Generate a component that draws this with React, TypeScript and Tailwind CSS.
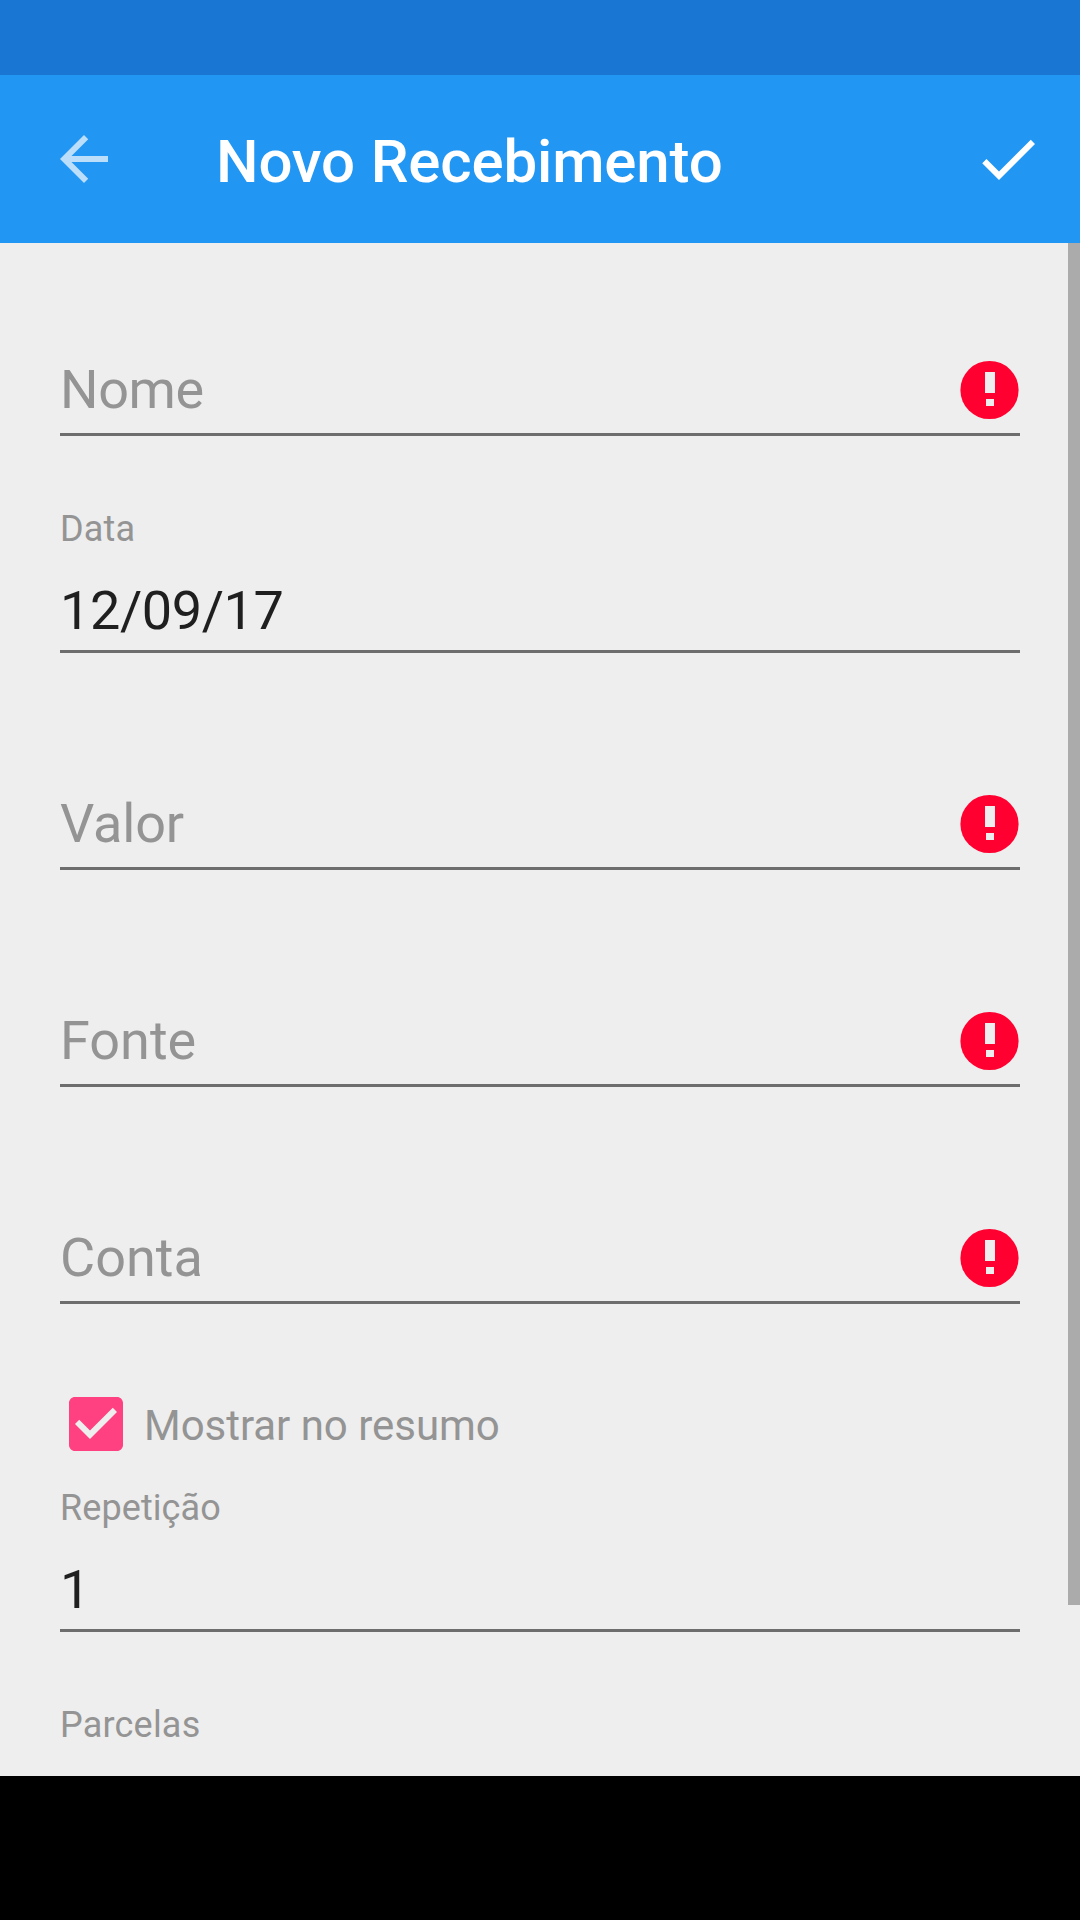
type FieldProps = { label: string; value?: string; error?: boolean; floating?: boolean; tracking?: string };

function ErrorIcon() {
  return (
    <svg className="size-[60px]" viewBox="0 0 60 60">
      <circle cx="29.5" cy="30" r="29.1" fill="#ff0030" />
      <path d="M25 12h10v21H25zM26 39h8v7h-8z" fill="#eee" />
    </svg>
  );
}

function Field({ label, value, error, floating, tracking = "tracking-normal" }: FieldProps) {
  return (
    <div className="h-[217px]">
      {floating ? (
        <div className="h-[169px] border-b-[3px] border-[#6d6d6d] pt-[24px]">
          <div className={`text-[36px] leading-[42px] text-[#949494] ${tracking}`}>{label}</div>
          {value && (
            <div className="mt-[29px] text-[54px] leading-[64px] tracking-[-0.4px] text-[#1f1f1f]">{value}</div>
          )}
        </div>
      ) : (
        <div className="flex h-[169px] items-start justify-between border-b-[3px] border-[#6d6d6d]">
          <div className={`mt-[91px] text-[54px] leading-[64px] text-[#949494] ${tracking}`}>{label}</div>
          {error && (
            <div className="mt-[93px]">
              <ErrorIcon />
            </div>
          )}
        </div>
      )}
    </div>
  );
}

export default function App() {
  return (
    <div className="flex h-[1920px] w-[1080px] flex-col overflow-hidden bg-black font-['Roboto',sans-serif]">
      <div className="h-[75px] shrink-0 bg-[#1976d2]" />
      <header className="flex h-[168px] shrink-0 items-center bg-[#2196f3] text-white">
        <svg className="ml-[48px] size-[72px]" viewBox="0 0 24 24" fill="#bbdefb">
          <path d="M20 11H7.83l5.59-5.59L12 4l-8 8 8 8 1.41-1.41L7.83 13H20v-2z" />
        </svg>
        <h1 className="ml-[96px] grow pt-[5px] text-[60px] leading-[70px] font-medium tracking-[-0.15px] [word-spacing:1px]">Novo Recebimento</h1>
        <svg className="mr-[36px] size-[72px]" viewBox="0 0 24 24" fill="#fff">
          <path d="M9 16.17L4.83 12l-1.42 1.41L9 19 21 7l-1.41-1.41z" />
        </svg>
      </header>
      <main className="relative h-[1533px] shrink-0 overflow-hidden bg-[#eee] px-[60px] pt-[24px]">
        <Field label="Nome" error tracking="tracking-[-0.35px]" />
        <Field label="Data" value="12/09/17" floating tracking="tracking-[0.2px]" />
        <Field label="Valor" error tracking="tracking-[-0.15px]" />
        <Field label="Fonte" error />
        <Field label="Conta" error />
        <label className="flex h-[111px] items-start pt-[36px]">
          <svg className="size-[72px]" viewBox="0 0 24 24" fill="#ff4081">
            <path d="M19 3H5c-1.11 0-2 .9-2 2v14c0 1.1.89 2 2 2h14c1.11 0 2-.9 2-2V5c0-1.1-.89-2-2-2zm-9 14l-5-5 1.41-1.41L10 14.17l7.59-7.59L19 8l-9 9z" />
          </svg>
          <span className="ml-[12px] pt-[13px] text-[42px] leading-[49px] tracking-[-0.03px] text-[#949494]">Mostrar no resumo</span>
        </label>
        <Field label="Repetição" value="1" floating tracking="tracking-[0.08px]" />
        <Field label="Parcelas" floating tracking="tracking-[0.2px]" />
        <div className="absolute top-0 right-0 h-[1362px] w-[12px] bg-[#ababab]" />
      </main>
    </div>
  );
}
